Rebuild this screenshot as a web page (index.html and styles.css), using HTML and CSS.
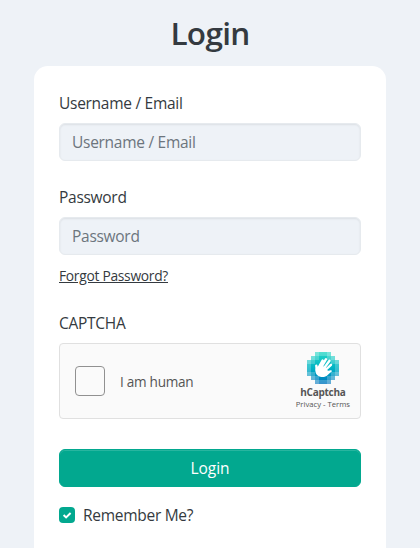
FILE: index.html
```html
<!DOCTYPE html>
<html lang="en">
<head>
    <meta charset="UTF-8">
    <meta name="viewport" content="width=device-width, initial-scale=1.0">
    <title>Login</title>
    <link rel="stylesheet" href="styles.css">
</head>
<body>
    <h1>Login</h1>

    <form class="card">
        <div class="field">
            <label for="username">Username / Email</label>
            <input class="text-input" id="username" type="text" placeholder="Username / Email">
        </div>
        <div class="field">
            <label for="password">Password</label>
            <input class="text-input" id="password" type="password" placeholder="Password">
            <a class="forgot" href="#">Forgot Password?</a>
        </div>
        <div class="field">
            <label>CAPTCHA</label>
            <div class="captcha">
                <div class="captcha-box"></div>
                <span class="captcha-text">I am human</span>
                <div class="captcha-brand">
                    <svg width="32" height="32" viewBox="0 0 32 32" shape-rendering="crispEdges">
                        <defs>
                            <linearGradient id="sea" x1="0" y1="0" x2="0" y2="32" gradientUnits="userSpaceOnUse">
                                <stop offset="0" stop-color="#24d8c5"/>
                                <stop offset="0.5" stop-color="#00b3c4"/>
                                <stop offset="1" stop-color="#0074bf"/>
                            </linearGradient>
                        </defs>
                        <g fill="url(#sea)">
                            <path opacity=".6" d="M8 0h4v4h-4zM20 0h4v4h-4zM4 4h4v4h-4zM24 4h4v4h-4zM0 8h4v4h-4zM28 8h4v4h-4zM0 20h4v4h-4zM28 20h4v4h-4zM4 24h4v4h-4zM24 24h4v4h-4zM8 28h4v4h-4zM20 28h4v4h-4z"/>
                            <path opacity=".78" d="M12 0h8v4h-8zM8 4h4v4h-4zM20 4h4v4h-4zM4 8h4v4h-4zM24 8h4v4h-4zM0 12h4v8h-4zM28 12h4v8h-4zM4 20h4v4h-4zM24 20h4v4h-4zM8 24h4v4h-4zM20 24h4v4h-4zM12 28h8v4h-8z"/>
                            <path d="M12 4h8v4h4v4h4v8h-4v4h-4v4h-8v-4h-4v-4h-4v-8h4v-4h4z"/>
                        </g>
                        <g fill="none" stroke="#fff" stroke-width="2.4" stroke-linecap="round" stroke-linejoin="round" shape-rendering="auto">
                            <path d="M11.6 15.5L15.6 8.6M14.2 15.5L19 7.2M16.8 16.5L22.5 8.8M18.5 18L24 12.8M9.8 18L9.3 13.6"/>
                            <path fill="#fff" stroke="none" d="M8.6 16.5L12 14l6 .5 2 3.2c.6 1.3 1.8 1.3 3.6.6 1.2-.4 1.7.8.9 1.5-1.3 1.1-2.6 2-3.8 3.2-2 2-4.8 2.4-7.5 1.7-3.8-1-5.4-4.2-4.6-8.2z"/>
                        </g>
                    </svg>
                    <div class="brand-name">hCaptcha</div>
                    <div class="brand-links">Privacy - Terms</div>
                </div>
            </div>
        </div>
        <button class="login-btn" type="button">Login</button>
        <label class="remember">
            <span class="check">
                <svg width="16" height="16" viewBox="0 0 16 16">
                    <path d="M4.6 8l2.5 2.4L11.6 6" fill="none" stroke="#fff" stroke-width="2"/>
                </svg>
            </span>
            <span>Remember Me?</span>
        </label>
    </form>
</body>
</html>
```
FILE: styles.css
```css
* {
    box-sizing: border-box;
}
body {
    margin: 0;
    padding: 0 34px;
    background: #eef2f7;
    color: #343a40;
    font-family: "Open Sans", sans-serif;
    font-size: 15.5px;
    line-height: 24px;
    letter-spacing: -0.28px;
}
h1 {
    margin: 0;
    padding-top: 14px;
    height: 66px;
    font-size: 31.5px;
    line-height: 38px;
    font-weight: 600;
    letter-spacing: -0.7px;
    text-align: center;
}
.card {
    height: 482px;
    padding: 25px 25px 0;
    background: #fff;
    border-radius: 14px 14px 0 0;
}
.field {
    display: flex;
    flex-direction: column;
    align-items: flex-start;
    margin-bottom: 24px;
}
.field label {
    margin-bottom: 8px;
}
.text-input {
    width: 100%;
    height: 38px;
    padding: 0 12px;
    border: 1px solid #e6eaee;
    border-radius: 6px;
    background: #eef2f7;
    box-shadow: inset 0 1px 2px rgba(0, 0, 0, 0.075);
    font: inherit;
    letter-spacing: inherit;
}
.text-input::placeholder {
    color: #6c757d;
    opacity: 1;
}
.forgot {
    margin-top: 10px;
    color: #343a40;
    font-size: 13.8px;
    line-height: 22px;
}
.captcha {
    display: flex;
    align-items: center;
    width: 100%;
    height: 76px;
    padding: 0 10px 0 15px;
    border: 1px solid #e0e0e0;
    border-radius: 4px;
    background: #fafafa;
    color: #555;
}
.captcha-box {
    width: 30px;
    height: 30px;
    border: 1px solid #919191;
    border-radius: 4px;
}
.captcha-text {
    margin-left: 15px;
    padding-top: 2px;
    font-size: 13.6px;
}
.captcha-brand {
    margin-left: auto;
    display: flex;
    flex-direction: column;
    align-items: center;
}
.brand-name {
    margin-top: 2px;
    font-size: 10px;
    line-height: 13px;
    font-weight: 700;
}
.brand-links {
    font-size: 7.7px;
    line-height: 11px;
    letter-spacing: 0;
}
.login-btn {
    display: block;
    width: 100%;
    height: 38px;
    margin-top: 30px;
    border: 1px solid #02a88f;
    border-radius: 6px;
    background: #02a88f;
    box-shadow: inset 0 1px 0 rgba(255, 255, 255, 0.15);
    color: #fff;
    font: inherit;
    letter-spacing: 0;
}
.remember {
    display: flex;
    align-items: center;
    gap: 8px;
    margin-top: 16px;
}
.check {
    width: 16px;
    height: 16px;
    border-radius: 4px;
    background: #02a88f;
}
.check svg {
    display: block;
}
```
